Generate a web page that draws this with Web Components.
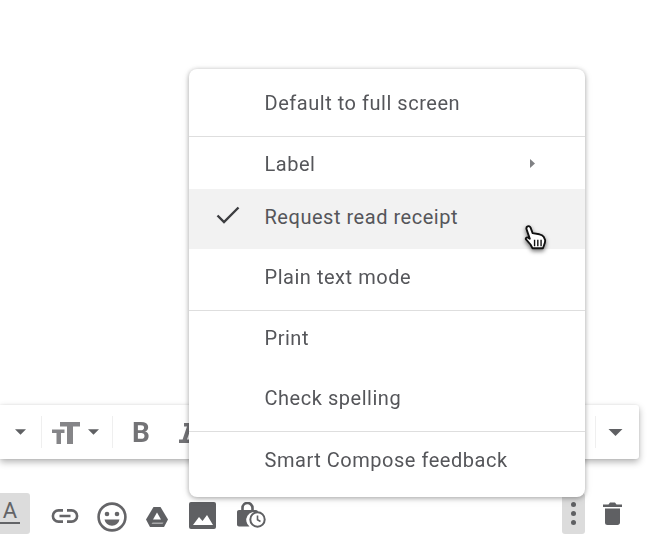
<!doctype html>
<html><head><meta charset="utf-8"><title>Compose menu</title>
<style>html,body{margin:0;background:#fff;overflow:hidden}body{width:647px;height:546px}</style></head>
<body>
<compose-stage>
  <format-bar></format-bar>
  <action-bar></action-bar>
  <more-menu>
    <menu-row h="67" t="20">Default to full screen</menu-row>
    <menu-rule></menu-rule>
    <menu-row h="52" t="13" arrow>Label</menu-row>
    <menu-row h="60" t="14" checked hovered>Request read receipt</menu-row>
    <menu-row h="61" t="14">Plain text mode</menu-row>
    <menu-rule></menu-rule>
    <menu-row h="60" t="13">Print</menu-row>
    <menu-row h="60" t="13">Check spelling</menu-row>
    <menu-rule></menu-rule>
    <menu-row h="65" t="14">Smart Compose feedback</menu-row>
  </more-menu>
  <hand-cursor></hand-cursor>
</compose-stage>
<script>
function def(name, html, init){
  customElements.define(name, class extends HTMLElement{
    connectedCallback(){
      if(this.shadowRoot) return;
      const r=this.attachShadow({mode:'open'});
      r.innerHTML=html;
      if(init) init(this,r);
    }
  });
}
const C='#5f6063', T='#737376';
def('compose-stage',`<style>:host{display:block;position:relative;width:647px;height:546px;overflow:hidden;font-family:Roboto,"Liberation Sans",sans-serif;padding-top:405px;box-sizing:border-box;filter:blur(.4px)}</style><slot></slot>`);
const caret=(ml,w,h)=>`<svg style="margin-left:${ml}px" width="${w}" height="${h}" viewBox="0 0 10 5"><path d="M0 0h10L5 5z" fill="${C}"/></svg>`;
const sep=(ml)=>`<i class="sep" style="margin-left:${ml}px"></i>`;
def('format-bar',`<style>:host{display:flex;width:639px;height:54px;box-sizing:border-box;background:#fff;border-radius:0 3px 3px 0;align-items:center;box-shadow:0 3px 7px rgba(0,0,0,.3),0 0 3px rgba(0,0,0,.08)}
.sep{display:block;width:1px;height:32px;background:#efefef;flex:none}svg{flex:none;display:block}
.b{font:700 28px/28px Roboto,sans-serif;color:${T};margin-left:19px;width:18px;display:block;margin-top:2px}
.fill{flex:1}</style>
${caret(15,11,6)}${sep(15)}
<svg style="margin-left:10px;margin-top:2px" width="28" height="22" viewBox="0 0 28 22"><path d="M8 0h20v4.500h-7V22h-6V4.500H8z M0 7.500h12.500v3.500H9V22H4.500V11H0z" fill="#858588"/></svg>
${caret(8,11,6)}${sep(13)}
<span class="b">B</span>
<svg style="margin-left:29px;margin-top:2px" width="16" height="20" viewBox="0 0 16 20"><path d="M5 0h11v3.400h-3.600L8 16.600h3V20H0v-3.400h3.600L8 3.400H5z" fill="${T}"/></svg>
<span class="fill"></span>${sep(0)}
${caret(12,15,7)}<span style="width:16px;flex:none"></span>`);
def('action-bar',`<style>:host{display:flex;height:41px;margin-top:34px;align-items:flex-start;position:relative;width:647px}svg{display:block;flex:none}
.on{width:30px;height:41px;background:#dcdcdc;border-radius:0 3px 3px 0;flex:none;display:block}
.a{font:400 22px/22px Roboto,sans-serif;color:#636467;margin-top:7px;border-bottom:2px solid #636467;height:22px;width:20px;text-align:center;display:block}
.dots{width:23px;height:41px;background:#dcdcdc;border-radius:3px;display:flex;flex:none;flex-direction:column;align-items:center;justify-content:center;gap:3.500px}
.dots i{display:block;width:5.500px;height:5.500px;border-radius:50%;background:${C}}</style>
<span class="on"><span class="a">A</span></span>
<svg style="margin-left:20px;margin-top:15px" width="30" height="16" viewBox="0 0 30 16"><path d="M13 2.400H8.500a5.600 5.600 0 0 0 0 11.200H13M17 2.400h4.500a5.600 5.600 0 0 1 0 11.200H17M9.500 8h11" fill="none" stroke="#656568" stroke-width="2.600"/></svg>
<svg style="margin-left:17px;margin-top:9px" width="30" height="30" viewBox="0 0 30 30"><circle cx="15" cy="15" r="13.400" fill="none" stroke="#656568" stroke-width="2.600"/><circle cx="10" cy="12" r="2.300" fill="#656568"/><circle cx="20" cy="12" r="2.300" fill="#656568"/><path d="M7.500 17.500h15a7.600 7.600 0 0 1-15 0z" fill="#656568"/></svg>
<svg style="margin-left:19px;margin-top:14px" width="22" height="20" viewBox="0 0 22 20"><path d="M7.500 0h7L22 12.500 18 20H4L0 12.500z" fill="${C}"/><path d="M11 5.500 7 12.500h8z" fill="#fff"/><path d="M6.500 15.500 5.500 17h11l1-1.500z" fill="#a9a9ab"/></svg>
<svg style="margin-left:21px;margin-top:9px" width="27" height="27" viewBox="0 0 27 27"><rect width="27" height="27" rx="2" fill="${C}"/><path d="M4 23l6-8 3.500 4L18 13l6 10z" fill="#fff"/></svg>
<svg style="margin-left:21px;margin-top:9px" width="29" height="26" viewBox="0 0 29 26"><path d="M5.500 8.500V6a5 5 0 0 1 10 0v2.500" fill="none" stroke="${C}" stroke-width="2.600"/><path d="M2 8h17c1.100 0 2 .9 2 2v1a8 8 0 0 0-8.500 13.500H2c-1.100 0-2-.9-2-2V10c0-1.100.9-2 2-2z" fill="${C}"/><circle cx="20.500" cy="17.500" r="7.200" fill="#fff" stroke="${C}" stroke-width="2"/><path d="M20.500 13.500v4.300l3 1.700" fill="none" stroke="${C}" stroke-width="1.600"/></svg>
<span style="flex:1"></span>
<span class="dots"><i></i><i></i><i></i></span>
<svg style="margin-left:18px;margin-right:25px;margin-top:9px" width="19" height="23" viewBox="0 0 19 23"><path d="M2 6.500h15v14c0 1.400-1.100 2.500-2.500 2.500h-10A2.500 2.500 0 0 1 2 20.500z M0 2.500h5.500L7 .5h5l1.500 2H19V5H0z" fill="${C}"/></svg>`);
def('more-menu',`<style>:host{display:block;position:absolute;left:189px;top:69px;width:396px;height:428px;box-sizing:border-box;background:#fff;border-radius:8px;box-shadow:0 1px 5px rgba(0,0,0,.3),0 2px 8px rgba(0,0,0,.1);overflow:hidden;color:#55565a;font-size:20px}</style><slot></slot>`);
def('menu-rule',`<style>:host{display:block;height:1px;background:#dedede}</style>`);
def('menu-row',`<style>:host{display:block;box-sizing:border-box;padding-left:75.500px;line-height:28px;position:relative;letter-spacing:.53px}
:host([hovered]){background:#f2f2f2}
.ck,.ar{position:absolute}.ck{left:27px;top:17px}.ar{left:341px;top:22px}</style><slot></slot><span id="x"></span>`,(el,r)=>{
  el.style.height=el.getAttribute('h')+'px';
  el.style.paddingTop=el.getAttribute('t')+'px';
  let h='';
  if(el.hasAttribute('checked')) h+=`<svg class="ck" width="24" height="18" viewBox="0 0 24 18"><path d="M1.500 9.500l6.500 6.500L22.500 1.500" fill="none" stroke="#3c3d40" stroke-width="2.400"/></svg>`;
  if(el.hasAttribute('arrow')) h+=`<svg class="ar" width="5" height="9" viewBox="0 0 5 9"><path d="M0 0l5 4.500L0 9z" fill="#808184"/></svg>`;
  r.getElementById('x').innerHTML=h;
});
def('hand-cursor',`<style>:host{display:block;position:absolute;left:524px;top:225px;width:23px;height:26px}svg{display:block;filter:drop-shadow(0 2px 2px rgba(0,0,0,.55))}</style>
<svg width="23" height="26" viewBox="0 0 24 28"><path d="M3.500 1.500c1.300-.7 2.700 0 3.200 1.300l2.200 6 7.300 1.200c2 .4 3.600 1.300 4.800 3l1.300 3c.4 2-.2 3.600-1 5.500l-1.300 3.500H8.800L6.600 21 1.800 15.600c-.8-1.200.5-2.800 2.200-2l1.900 1.300L2.300 4.500c-.4-1.300 0-2.400 1.200-3z" fill="#fff" stroke="#111" stroke-width="2" stroke-linejoin="round"/><path d="M11 16v7M14.500 16v7M18 16v7" stroke="#111" stroke-width="1.500"/></svg>`);
</script>
</body></html>
